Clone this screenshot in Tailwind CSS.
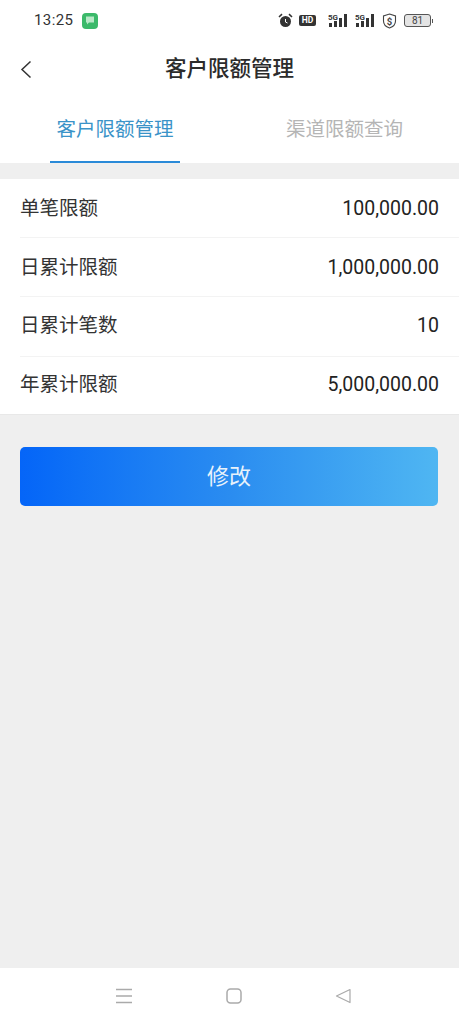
<!DOCTYPE html>
<html lang="zh">
<head>
    <meta charset="UTF-8">
    <meta name="viewport" content="width=device-width, initial-scale=1.0">
    <title>客户限额管理</title>
    <script src="https://cdn.jsdelivr.net/npm/@tailwindcss/browser@4"></script>
</head>
<body class="bg-[#efefef] font-['Roboto','Noto_Sans_CJK_SC',sans-serif]">
    <div class="flex flex-col h-[1024px] w-[459px] overflow-hidden">
        <!-- Status bar -->
        <div class="flex items-center justify-between h-[41px] bg-white pl-[34px] pr-[26px] text-[#333]">
            <div class="flex items-center gap-[9px]">
                <span class="text-[15px] leading-none tracking-[0.4px]">13:25</span>
                <span class="flex items-center justify-center w-4 h-4 rounded-[4px] bg-[#3bb96a]">
                    <svg width="10" height="9" viewBox="0 0 10 9">
                        <path d="M1 0.5H9V6.5H4L2 8.5V6.5H1Z" fill="#b9e8c8"/>
                    </svg>
                </span>
            </div>
            <div class="flex items-center">
                <!-- alarm -->
                <svg width="15" height="15" viewBox="0 0 15 15">
                    <circle cx="7.5" cy="8.5" r="5.5" fill="#333"/>
                    <path d="M1 4 L4 1.2 M14 4 L11 1.2" stroke="#333" stroke-width="1.6"/>
                    <path d="M7.5 6v3l2 1" stroke="#fff" stroke-width="1" fill="none"/>
                </svg>
                <!-- HD -->
                <span class="flex items-center justify-center ml-[6px] w-[17px] h-[11px] rounded-[2px] bg-[#333] text-white text-[8.5px] leading-none font-bold">HD</span>
                <!-- signal -->
                <svg class="ml-[12px]" width="21" height="16" viewBox="0 0 21 16">
                    <text x="0" y="6.5" font-size="8" font-weight="700" fill="#333" font-family="Roboto">5G</text>
                    <rect x="1" y="10" width="3" height="4" fill="#333"/>
                    <rect x="6" y="8" width="3" height="6" fill="#333"/>
                    <rect x="11" y="5" width="3" height="9" fill="#333"/>
                    <rect x="16" y="1" width="3" height="13" fill="#333"/>
                </svg>
                <svg class="ml-[6px]" width="21" height="16" viewBox="0 0 21 16">
                    <text x="0" y="6.5" font-size="8" font-weight="700" fill="#333" font-family="Roboto">5G</text>
                    <rect x="1" y="10" width="3" height="4" fill="#333"/>
                    <rect x="6" y="8" width="3" height="6" fill="#333"/>
                    <rect x="11" y="5" width="3" height="9" fill="#333"/>
                    <rect x="16" y="1" width="3" height="13" fill="#333"/>
                </svg>
                <!-- shield -->
                <svg class="ml-[6px]" width="15" height="16" viewBox="0 0 15 16">
                    <path d="M7.5 1 L13.5 3 V8 C13.5 11.5 10.5 14 7.5 15 C4.5 14 1.5 11.5 1.5 8 V3 Z" fill="none" stroke="#444" stroke-width="1.1"/>
                    <text x="7.5" y="11.5" font-size="9.5" font-weight="700" fill="#444" text-anchor="middle" font-family="Roboto">$</text>
                </svg>
                <!-- battery -->
                <div class="flex items-center ml-[7px]">
                    <span class="flex items-center justify-center w-[27px] h-[13px] rounded-[3px] border border-[#555] bg-[#e4e4e4] text-[10px] leading-none text-[#444]">81</span>
                    <span class="ml-px w-px h-[4px] bg-[#555]"></span>
                </div>
            </div>
        </div>

        <!-- Title bar -->
        <div class="relative flex items-center justify-center h-[55px] bg-white">
            <svg class="absolute left-[20px] top-[19px]" width="12" height="19" viewBox="0 0 12 19">
                <path d="M10.5 1.5 L2 9.5 L10.5 17.5" fill="none" stroke="#333" stroke-width="1.5"/>
            </svg>
            <h1 class="text-[21.5px] leading-none font-medium text-[#2b2b2b] mt-[1px]">客户限额管理</h1>
        </div>

        <!-- Tabs -->
        <div class="flex h-[67px] bg-white">
            <div class="flex flex-col items-center justify-between w-[230px]">
                <span class="flex-1 flex items-center text-[19.5px] leading-none text-[#3a93c8] pt-[3px]">客户限额管理</span>
                <span class="block w-[130px] h-[2.5px] bg-[#2a8ad8]"></span>
            </div>
            <div class="flex items-center justify-center w-[229px] pt-[1px]">
                <span class="text-[19.5px] leading-none text-[#b5b5b5]">渠道限额查询</span>
            </div>
        </div>

        <!-- Limits -->
        <div class="mt-4 bg-white pl-[20px] text-[19.5px] text-[#333] border-b border-[#e8e8e8]">
            <div class="flex items-center justify-between h-[59px] pt-[2px] pr-[20px] border-b border-[#f3f3f3]">
                <span>单笔限额</span><span class="text-[#222]">100,000.00</span>
            </div>
            <div class="flex items-center justify-between h-[59px] pt-[1px] pr-[20px] border-b border-[#f3f3f3]">
                <span>日累计限额</span><span class="text-[#222]">1,000,000.00</span>
            </div>
            <div class="flex items-center justify-between h-[60px] pb-[2px] pr-[20px] border-b border-[#f3f3f3]">
                <span>日累计笔数</span><span class="text-[#222]">10</span>
            </div>
            <div class="flex items-center justify-between h-[57px] pb-[2px] pr-[20px]">
                <span>年累计限额</span><span class="text-[#222]">5,000,000.00</span>
            </div>
        </div>

        <!-- Button -->
        <div class="flex-1 px-[20px] pt-[32px]">
            <button class="block w-[418px] h-[59px] rounded-[5px] bg-gradient-to-r from-[#0565f8] via-[#2a8cf0] to-[#4fb6f2] text-[22px] text-[#e8f2fb]">修改</button>
        </div>

        <!-- Nav bar -->
        <div class="flex items-center h-[56px] bg-white pb-[1px]">
            <div class="flex items-center justify-between w-full pl-[116px] pr-[108px]">
                <svg width="16" height="16" viewBox="0 0 16 16">
                    <path d="M0 1.5H16M0 8H16M0 14.5H16" stroke="#aaa" stroke-width="1.6"/>
                </svg>
                <svg width="16" height="16" viewBox="0 0 16 16">
                    <rect x="1" y="1" width="14" height="14" rx="3.5" fill="none" stroke="#aaa" stroke-width="1.5"/>
                </svg>
                <svg width="16" height="16" viewBox="0 0 16 16">
                    <path d="M15 1.5 L1.5 8 L15 14.5 Z" fill="none" stroke="#aaa" stroke-width="1.2" stroke-linejoin="round"/>
                </svg>
            </div>
        </div>
    </div>
</body>
</html>
